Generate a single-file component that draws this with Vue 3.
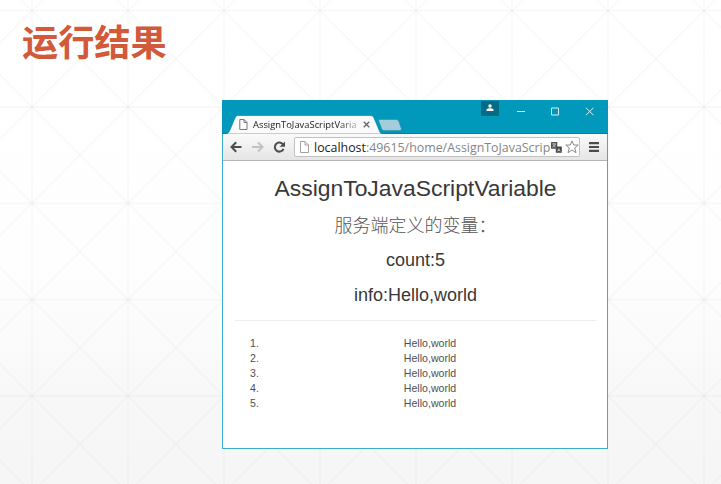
<script setup>
const items = Array.from({ length: 5 }, () => 'Hello,world')
</script>

<template>
  <main class="slide">
    <svg class="backdrop" width="721" height="484" viewBox="0 0 721 484" aria-hidden="true">
      <defs>
        <pattern id="lattice" x="32" y="10.5" width="96" height="96.4" patternUnits="userSpaceOnUse">
          <path d="M0 0V96.4M96 0V96.4" stroke="#000" stroke-opacity=".02" stroke-width="2" />
          <path d="M0 0H96M0 96.4H96" stroke="#000" stroke-opacity=".03" stroke-width="1.5" />
          <path d="M0 0L96 96.4M96 0L0 96.4" stroke="#000" stroke-opacity=".03" stroke-width="1.2" />
        </pattern>
      </defs>
      <rect width="721" height="484" fill="url(#lattice)" />
    </svg>
    <h1 class="title">运行结果</h1>

    <section class="window">
      <header class="titlebar">
        <div class="tab">
          <svg class="tab-shape" width="160" height="19" viewBox="0 0 160 19">
            <path d="M0 19C3 19 4 17 5 15L10 3C11 1 12 .5 14 .5H144C147 .5 148 1 149 3L154 15C155 18 156 19 159 19Z" fill="#fbfbfb" stroke="#087f9c" stroke-width=".6" />
          </svg>
          <svg class="tab-file" width="9" height="11" viewBox="0 0 9 11" fill="#fff" stroke="#777"><path d="M.8.5H5L8 3.5V10.5H.8ZM5 .5V3.5H8" /></svg>
          <span class="tab-text">AssignToJavaScriptVaria</span>
          <svg class="tab-close" width="7" height="7" viewBox="0 0 7 7" stroke="#666" stroke-width="1.3"><path d="M.7.7L6.3 6.3M6.3.7L.7 6.3" /></svg>
        </div>
        <svg class="new-tab" width="24" height="12" viewBox="0 0 24 12"><path d="M2 .5H18Q20 .5 20.7 2L23.3 9.5Q24 11.5 22 11.5H6Q4.500 11.500 3.800 10L.7 2Q0 .5 2 .5Z" fill="#a4cddb" stroke="#2990ad" stroke-width=".6" /></svg>
        <div class="controls">
          <span class="user"><svg width="8" height="8" viewBox="0 0 8 8" fill="#fff"><circle cx="4" cy="2" r="1.7" /><path d="M.5 7V5.600Q1.200 4.200 4 4.200T7.500 5.600V7Z" /></svg></span>
          <svg class="win-icons" width="78" height="9" viewBox="0 0 78 9" fill="none" stroke="#d8eff5"><path d="M0 4.500H8M34.500 1H41.500V8H34.500ZM69 .8L76.400 8.200M76.400 .8L69 8.200" /></svg>
        </div>
      </header>

      <nav class="toolbar">
        <svg class="nav-icons" width="56" height="14" viewBox="0 0 56 14" fill="none" stroke-width="2">
          <path d="M11.500 7H1.500M6.200 2.300L1.500 7L6.200 11.700" stroke="#4c4c4c" />
          <path d="M22 7H32.500M28 2.500L32.500 7L28 11.500" stroke="#c2c2c2" />
          <path d="M53 4.500A4.500 4.500 0 1 0 53.500 8.800" stroke="#4c4c4c" /><path d="M55 1.500V6.800H49.700Z" fill="#4c4c4c" />
        </svg>
        <div class="address">
          <svg width="9" height="12" viewBox="0 0 9 12" fill="#fff" stroke="#a2a2a2"><path d="M.5.5H5L8.500 4V11.500H.5ZM5 .5V4H8.500" /></svg>
          <span class="url"><b>localhost</b>:49615/home/AssignToJavaScrip</span>
          <svg class="translate" width="11" height="11" viewBox="0 0 11 11">
            <rect x="4.800" y="4.500" width="6" height="6.300" rx=".5" fill="#444" /><rect width="6.300" height="6.800" rx=".5" fill="#555" />
            <path d="M1.200 2H5M3.100 1V2M4.500 2Q4 4 1.400 5.300M2 3L4.500 5" fill="none" stroke="#ddd" stroke-width=".7" /><path d="M6.500 9.500L7.800 6.500L9.200 9.500M7 8.500H8.700" fill="none" stroke="#ddd" stroke-width=".7" />
          </svg>
          <svg class="star" width="14" height="14" viewBox="0 0 14 14" fill="#fff" stroke="#8b8b8b"><path d="M7 .9L8.700 5H13.200L9.700 7.900L11 12.700L7 10L3 12.700L4.300 7.900L.8 5H5.300Z" /></svg>
        </div>
        <svg class="menu" width="10" height="10" viewBox="0 0 10 10" fill="#4b4b4b"><path d="M0 0H10V2.200H0ZM0 3.900H10V6.100H0ZM0 7.800H10V10H0Z" /></svg>
      </nav>

      <article class="page">
        <h2>AssignToJavaScriptVariable</h2>
        <h3 class="cjk">服务端定义的变量：</h3>
        <h3>count:5</h3>
        <h3>info:Hello,world</h3>
        <hr />
        <ol>
          <li v-for="(item, i) in items" :key="i"><span class="num">{{ i + 1 }}.</span><span class="val">{{ item }}</span></li>
        </ol>
      </article>
    </section>
  </main>
</template>

<style>
body { margin: 0; overflow: hidden; }
</style>

<style scoped>
* { box-sizing: border-box; }
svg { display: block; flex: none; }
.slide { position: relative; width: 721px; height: 484px; overflow: hidden; background: linear-gradient(#fff 0, #fefefe 270px, #f7f7f7 410px, #f6f6f6 100%); }
.backdrop { position: absolute; inset: 0; }
.title { position: relative; margin: 0; padding: 14px 0 0 22px; height: 100px; font: 700 36.2px/53px "Noto Sans CJK SC", sans-serif; color: #d3593b; }
.window { position: relative; margin-left: 222px; width: 386px; height: 349px; border: 1px solid #3bafc7; background: #fff; display: flex; flex-direction: column; }
.titlebar { height: 34px; margin: -1px -1px 0; flex: none; background: #0099bc; border-bottom: 1px solid #087f9c; display: flex; align-items: flex-start; }
.tab { position: relative; width: 160px; height: 19px; margin: 15px 0 0 3px; display: flex; align-items: center; flex: none; }
.tab-shape { position: absolute; left: 0; top: 0; }
.tab-file { position: relative; margin-left: 14px; }
.tab-text { position: relative; width: 105px; margin-left: 5px; overflow: hidden; white-space: nowrap; font: 9.4px/16px "Open Sans", sans-serif; color: #222; -webkit-mask-image: linear-gradient(90deg, #000 82%, rgba(0,0,0,.25)); mask-image: linear-gradient(90deg, #000 82%, rgba(0,0,0,.25)); }
.tab-close { position: relative; margin-left: 5px; }
.new-tab { margin: 19px 0 0 -7px; position: relative; }
.controls { margin-left: auto; display: flex; margin-right: 13px; }
.user { width: 18px; height: 15px; margin-top: 1px; background: #066c85; display: flex; justify-content: center; padding-top: 3px; }
.win-icons { margin: 7px 0 0 18px; }
.toolbar { height: 27px; flex: none; border-bottom: 1px solid #b5b5b5; background: linear-gradient(#fafafa, #e5e5e5); display: flex; align-items: center; padding: 0 8px 0 7px; }
.address { width: 286px; height: 20px; margin-left: 8px; border: 1px solid #c1c1c1; border-radius: 2px; background: #fff; display: flex; align-items: center; padding: 0 1px 0 5px; }
.url { width: 237px; margin-left: 5px; padding-top: 1px; white-space: nowrap; font: 12.4px/18px "Open Sans", sans-serif; color: #858585; flex: none; }
.url b { font-weight: 400; color: #222; }
.star { margin-left: 3px; }
.menu { margin-left: auto; }
.page { padding: 0 11px 0 12px; font-family: "Liberation Sans", Arial, sans-serif; color: #383838; text-align: center; }
h2 { margin: 14px 0 0; font-weight: 400; font-size: 22.9px; line-height: 26px; }
h3 { margin: 15px 0 0; font-weight: 400; font-size: 18px; line-height: 20px; }
h3.cjk { margin: 13px 0 16px; font-family: "Noto Sans CJK SC", sans-serif; font-weight: 300; color: #555; }
h3.cjk + h3 { margin-top: 0; }
hr { height: 1px; border: 0; background: #eee; margin: 15px 0 15px; }
ol { list-style: none; margin: 0; padding: 0; font-size: 10.6px; line-height: 15px; color: #505050; }
li { display: flex; }
.num { width: 29px; padding-left: 15px; text-align: left; }
.val { flex: 1; }
</style>
